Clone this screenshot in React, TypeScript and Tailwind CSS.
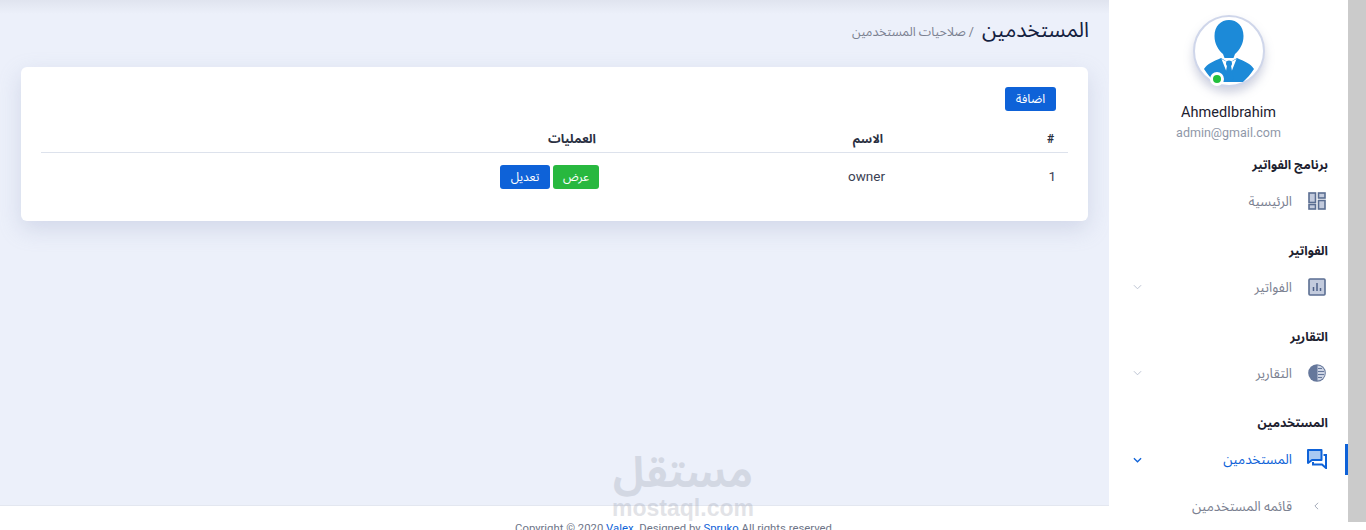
import React from "react";

const AR = "font-['Roboto','Noto_Sans','Noto_Sans_Arabic','Open_Sans','DejaVu_Sans',sans-serif]";

function Avatar() {
  return (
    <div className="relative w-[72px] h-[72px] rounded-full bg-white border-2 border-[#cfd6ea] shadow-[0_6px_10px_rgba(120,130,170,0.35)]">
      <svg viewBox="0 0 68 68" className="w-[68px] h-[68px]">
        <path d="M34 3c8 0 14.500 6 14.500 16 0 8-4 14-8.500 18l-1.500 4h-9l-1.500-4c-4.500-4-8.500-10-8.500-18C19.500 9 26 3 34 3z" fill="#1c8ad8" />
        <path d="M9 52c3-5 10-8 17-11l8 5 8-5c7 3 14 6 17 11-3 5-7 9-11 13H20c-4-4-8-8-11-13z" fill="#1c8ad8" />
        <path d="M26.500 42l7.500 19 7.500-19-7.500 4z" fill="#fff" />
        <circle cx="34" cy="46.500" r="3" fill="#1c8ad8" />
        <path d="M32 48.500h4l2.500 14-4.500 2.500-4.500-2.500z" fill="#1c8ad8" />
      </svg>
      <span className="absolute left-[15px] bottom-[-1px] w-3.5 h-3.5 rounded-full bg-[#22c03c] border-[3px] border-white" />
    </div>
  );
}

const IconDash = () => (
  <svg viewBox="0 0 18 18" className="w-[18px] h-[18px]" fill="#c3cbdd" stroke="#5b6e92" strokeWidth="1.600">
    <rect x="1" y="1" width="6.500" height="9.500" />
    <rect x="10.500" y="1" width="6.500" height="5" />
    <rect x="1" y="12.500" width="6.500" height="4.500" />
    <rect x="10.500" y="8.500" width="6.500" height="8.500" />
  </svg>
);
const IconChart = () => (
  <svg viewBox="0 0 18 18" className="w-[18px] h-[18px]">
    <rect x="1" y="1" width="16" height="16" rx="1" fill="#c3cbdd" stroke="#5b6e92" strokeWidth="1.600" />
    <path d="M5.500 13V9M9 13V5M12.500 13v-3" stroke="#4e6088" strokeWidth="1.500" />
  </svg>
);
const IconPie = () => (
  <svg viewBox="0 0 18 18" className="w-[18px] h-[18px]">
    <circle cx="9" cy="9" r="8.800" fill="#65779b" />
    <path d="M9.500 1.600a7.400 7.400 0 0 1 0 14.800z" fill="#cdd4e4" />
    <path d="M10 4.500h4M10 7.500h6M10 10.500h6M10 13.500h4" stroke="#65779b" strokeWidth="1" />
  </svg>
);
const IconChat = () => (
  <svg viewBox="0 0 20 20" className="w-[20px] h-[20px]">
    <path d="M1 1h13.500v10H5l-4 3z" fill="#a9c9f2" stroke="#0e62d8" strokeWidth="2" strokeLinejoin="round" />
    <path d="M16.500 6H19v13l-4-3.500H6v-2.500" fill="none" stroke="#0e62d8" strokeWidth="2" />
  </svg>
);
const Chevron = ({ active }: { active?: boolean }) => (
  <svg viewBox="0 0 10 6" className="w-[9px] h-[6px]" fill="none" stroke={active ? "#0e62d8" : "#b4bccd"} strokeWidth={active ? 1.400 : 1}>
    <path d="M1 1l4 4 4-4" />
  </svg>
);

function Section({ title, label, icon, chevron }: { title: string; label: string; icon: React.ReactNode; chevron?: boolean }) {
  return (
    <div className="pb-3.5">
      <div className="h-5 pr-[20px] flex items-center text-[12.500px] font-bold text-[#1d212f]">{title}</div>
      <div className="h-[52px] flex items-center">
        <div className="h-[31px] w-full flex items-center pr-[21px] relative">
          <span className="w-5 flex justify-center shrink-0">{icon}</span>
          <span className="mr-[15px] text-[13.500px] text-[#7b8191]">{label}</span>
          {chevron && (
            <span className="absolute left-[24px] top-[12px]">
              <Chevron />
            </span>
          )}
        </div>
      </div>
    </div>
  );
}

function Sidebar() {
  return (
    <aside className="w-[239px] shrink-0 bg-white h-[530px] overflow-hidden">
      <div className="pt-[15px] flex flex-col items-center">
        <Avatar />
        <div dir="ltr" className="mt-[16px] text-[14.500px] leading-5 text-[#1d212f]">AhmedIbrahim</div>
        <div dir="ltr" className="mt-[1px] text-[12.500px] leading-[18px] text-[#8f97a8]">admin@gmail.com</div>
      </div>
      <div className="mt-[13px]">
        <Section title="برنامج الفواتير" label="الرئيسية" icon={<IconDash />} />
        <Section title="الفواتير" label="الفواتير" icon={<IconChart />} chevron />
        <Section title="التقارير" label="التقارير" icon={<IconPie />} chevron />
        <div>
          <div className="h-5 pr-[20px] flex items-center text-[12.500px] font-bold text-[#1d212f]">المستخدمين</div>
          <div className="h-[52px] flex items-center">
            <div className="h-[31px] w-full flex items-center pr-[18px] border-r-[3px] border-[#0e62d8] relative">
              <span className="w-5 flex justify-center shrink-0"><IconChat /></span>
              <span className="mr-[15px] text-[13.500px] text-[#0e62d8]">المستخدمين</span>
              <span className="absolute left-[24px] top-[13px]"><Chevron active /></span>
            </div>
          </div>
          <div className="h-[42px] flex items-center pr-[29px] text-[13.500px] text-[#7b8191]">
            <svg viewBox="0 0 6 10" className="w-[5px] h-[8px] shrink-0" fill="none" stroke="#8d95a8" strokeWidth="1">
              <path d="M5 1L1 5l4 4" />
            </svg>
            <span className="mr-[22px]">قائمه المستخدمين</span>
          </div>
        </div>
      </div>
    </aside>
  );
}

function Main() {
  return (
    <main className="flex-1 min-w-0 h-[530px] flex flex-col bg-[#ecf0fa] relative overflow-hidden">
      <div className="absolute top-0 inset-x-0 h-[14px] bg-gradient-to-b from-[#e0e4ef] to-[#ecf0fa]" />
      <div className="flex-1 min-h-0 px-[21px] relative">
        <div className="h-[67px] flex items-center pb-[6px] -mr-px">
          <h1 className="text-[21px] leading-none text-[#14213f]">المستخدمين</h1>
          <span className="mr-[8px] mt-[3px] text-[12.500px] text-[#7b8191]">/ صلاحيات المستخدمين</span>
        </div>
        <div className="bg-white rounded-[6px] h-[154px] shadow-[0_8px_22px_rgba(150,160,195,0.3)] px-[20px] pt-[20px]">
          <div className="h-[24px] pr-[12px] flex">
            <button className="w-[51px] h-[24px] rounded-[3px] bg-[#0e62d8] text-white text-[12.500px]">اضافة</button>
          </div>
          <table className="w-full mt-[10px] table-fixed border-collapse">
            <thead>
              <tr className="h-[31px] border-b border-[#dde2ec] text-[12px] font-bold text-[#2a3042]">
                <th className="w-[173px] text-right pr-[14px] pt-[6px] font-bold">#</th>
                <th className="w-[287px] text-right pr-[12px] pt-[6px] font-bold">الاسم</th>
                <th className="text-right pr-[12px] pt-[6px] font-bold text-[12.500px]">العمليات</th>
              </tr>
            </thead>
            <tbody>
              <tr className="h-[46px] text-[13.500px] text-[#3b4154]">
                <td className="pr-[12px] pt-[2px]">1</td>
                <td className="pr-[10px] pt-[2px]">owner</td>
                <td className="pr-[9px] pt-[4px]">
                  <div className="flex gap-[3px]">
                    <button className="w-[46px] h-[24px] rounded-[3px] bg-[#28b83f] text-white text-[12px]">عرض</button>
                    <button className="w-[50px] h-[24px] rounded-[3px] bg-[#0e62d8] text-white text-[12px]">تعديل</button>
                  </div>
                </td>
              </tr>
            </tbody>
          </table>
        </div>
      </div>
      <footer dir="ltr" className="h-[25px] shrink-0 bg-white border-t border-[#e3e7f0] flex justify-center pl-[241px] pt-[15px] text-[11.300px] leading-4 text-[#6d7487] whitespace-nowrap">
        <span>Copyright © 2020 <span className="text-[#0e62d8]">Valex</span>. Designed by <span className="text-[#0e62d8]">Spruko</span> All rights reserved.</span>
      </footer>
      <div className="absolute left-[613px] top-[450px] w-[140px] flex flex-col items-center pointer-events-none text-[#8d92a3] opacity-25">
        <span className="text-[42px] leading-[46px] font-bold">مستقل</span>
        <span dir="ltr" className="text-[23px] leading-[24px] font-bold font-['Liberation_Sans',sans-serif]">mostaql.com</span>
      </div>
    </main>
  );
}

export default function App() {
  return (
    <div dir="rtl" className={`flex h-[530px] w-[1366px] overflow-hidden ${AR}`}>
      <div className="w-[18px] shrink-0 h-[530px] bg-white">
        <div className="h-[522px] bg-[#cbcbcb]" />
      </div>
      <Sidebar />
      <Main />
    </div>
  );
}
